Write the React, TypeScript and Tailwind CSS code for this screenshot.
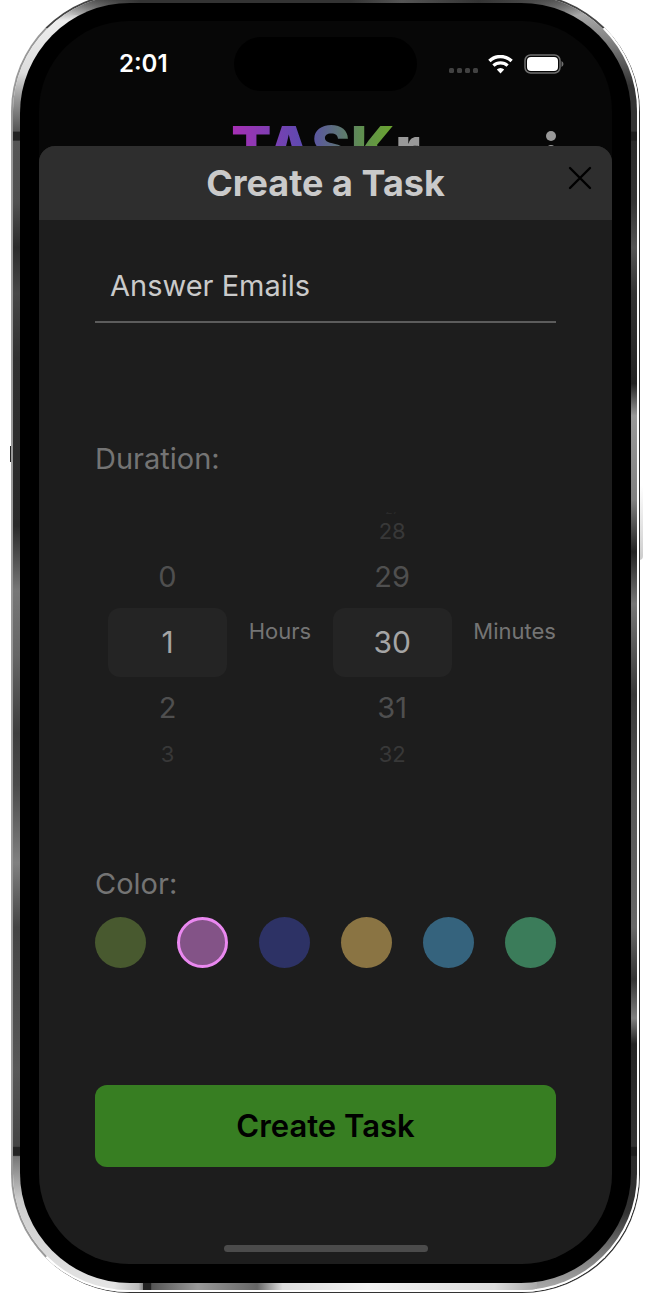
import { useState } from "react";

const swatches = [
  { name: "Olive", fill: "bg-[#48592f]" },
  { name: "Orchid", fill: "bg-[#835387]" },
  { name: "Indigo", fill: "bg-[#2d3265]" },
  { name: "Gold", fill: "bg-[#8a7443]" },
  { name: "Steel blue", fill: "bg-[#35637d]" },
  { name: "Jade", fill: "bg-[#3b7c5a]" },
];

function StatusBar() {
  return (
    <div className="flex h-[86px] items-center pl-20 pr-12">
      <time className="w-[115px] text-2xl font-semibold text-white">2:01</time>
      <div className="h-[54px] w-[183px] rounded-full bg-black" />
      <div className="ml-auto flex w-[115px] items-center">
        <svg width="29" height="20" viewBox="0 0 29 20" fill="#414141" aria-hidden="true">
          <rect x="0" y="14" width="5" height="5" rx="1.5" />
          <rect x="8" y="14" width="5" height="5" rx="1.5" />
          <rect x="16" y="14" width="5" height="5" rx="1.5" />
          <rect x="24" y="14" width="5" height="5" rx="1.5" />
        </svg>
        <svg className="ml-[10px]" width="25" height="19" viewBox="0 0 25 19" fill="none" stroke="#fff" aria-hidden="true">
          <path d="M1.4 6A16 16 0 0 1 23.6 6" strokeWidth="3.4" />
          <path d="M5.4 10.6A10.4 10.4 0 0 1 19.6 10.6" strokeWidth="3.2" />
          <path d="M12.5 18.4L8.8 14.6A5.3 5.3 0 0 1 16.2 14.6Z" fill="#fff" stroke="none" />
        </svg>
        <svg className="ml-[11px]" width="40" height="20" viewBox="0 0 40 20" aria-hidden="true">
          <rect x="1" y="1" width="35" height="18" rx="5.5" fill="none" stroke="#707070" strokeWidth="1.5" />
          <rect x="3" y="3" width="31" height="14" rx="4" fill="#fff" />
          <path d="M37.5 7Q39.5 8 39.5 10T37.5 13Z" fill="#707070" />
        </svg>
      </div>
    </div>
  );
}

function Wheel({ label, values }: { label: string; values: string[] }) {
  return (
    <ul role="listbox" aria-label={label} className="flex h-[260px] w-[119px] flex-col items-center overflow-hidden">
      <li className="flex h-1 w-full items-end justify-center overflow-hidden text-xs leading-3 text-[#2a2a2a]">{values[0]}</li>
      <li className="flex h-[30px] items-center text-[22px] text-[#383838]">{values[1]}</li>
      <li className="flex h-[62px] items-center text-[29px] text-[#4f4f4f]">{values[2]}</li>
      <li role="option" aria-selected="true" className="flex h-[69px] w-full shrink-0 items-center justify-center rounded-xl bg-[#242424] text-[30px] text-[#a5a5a5]">
        {values[3]}
      </li>
      <li className="flex h-[62px] items-center text-[29px] text-[#4f4f4f]">{values[4]}</li>
      <li className="flex h-[30px] items-center text-[22px] text-[#383838]">{values[5]}</li>
    </ul>
  );
}

function TaskForm() {
  const [title, setTitle] = useState("Answer Emails");
  const [color, setColor] = useState("Orchid");
  return (
    <form className="flex flex-col px-14 pt-[33px]" onSubmit={(e) => e.preventDefault()}>
      <input
        aria-label="Task name"
        value={title}
        onChange={(e) => setTitle(e.target.value)}
        className="h-[70px] w-full border-b-2 border-[#5c5c5c] bg-transparent px-[15px] pb-1 text-[29px] text-[#cacaca] outline-none"
      />

      <h2 className="mt-[115px] text-[29px] leading-[42px] text-[#747474]">Duration:</h2>
      <div className="mt-8 flex items-center justify-between pl-[13px]">
        <Wheel label="Hours" values={["", "", "0", "1", "2", "3"]} />
        <span className="pb-[22px] text-[22px] leading-8 text-[#747474]">Hours</span>
        <Wheel label="Minutes" values={["27", "28", "29", "30", "31", "32"]} />
        <span className="pb-[22px] text-[22px] leading-8 text-[#747474]">Minutes</span>
      </div>

      <fieldset className="mt-[91px]">
        <legend className="text-[29px] leading-[42px] text-[#747474]">Color:</legend>
        <div className="mt-3 flex justify-between">
          {swatches.map((s) => (
            <input
              key={s.name}
              type="radio"
              name="color"
              aria-label={s.name}
              checked={color === s.name}
              onChange={() => setColor(s.name)}
              className={`size-[51px] appearance-none rounded-full checked:border-3 checked:border-[#ea88f0] ${s.fill}`}
            />
          ))}
        </div>
      </fieldset>

      <button type="submit" className="mt-[117px] h-[82px] rounded-xl bg-[#377e22] text-[31px] font-semibold text-black">
        Create Task
      </button>
    </form>
  );
}

/* Brushed-metal reflections along the four sides of the phone's frame. */
function MetalRim() {
  return (
    <div className="absolute inset-0" aria-hidden="true">
      <div className="absolute inset-y-0 left-0 w-1/2 bg-[linear-gradient(180deg,#444_0%,#eee_2%,#ddd_6%,#999_8%,#555_10.5%,#222_10.6%,#222_11.2%,#555_11.3%,#505050_16%,#2b2b2b_19.5%,#464646_23%,#303030_28%,#292929_41%,#777_46%,#666_51%,#3d3d3d_57%,#4a4a4a_61%,#808080_67%,#444_72%,#585858_83%,#444_88.9%,#222_89%,#222_89.6%,#777_89.7%,#ccc_93%,#e5e5e5_100%)]" />
      <div className="absolute inset-y-0 right-0 w-1/2 bg-[linear-gradient(180deg,#444_0%,#aaa_1.5%,#777_4%,#333_7%,#333_10.5%,#1c1c1c_10.6%,#1c1c1c_11.2%,#2a2a2a_11.3%,#333_16%,#555_19.5%,#333_23%,#222_30%,#999_32.5%,#808080_39%,#222_43%,#777_47%,#383838_54%,#555_62%,#686868_72%,#333_76%,#808080_79%,#222_81%,#333_88.9%,#1c1c1c_89%,#1c1c1c_89.6%,#2a2a2a_89.7%,#333_94%,#777_97%,#aaa_100%)]" />
      <div className="absolute inset-x-14 top-0 h-5 bg-[linear-gradient(90deg,transparent,#333_14%,#333_55%,#555_65%,#333_80%,#444_88%,transparent)]" />
      <div className="absolute inset-x-[100px] bottom-0 h-5 bg-[linear-gradient(90deg,#e5e5e5_0%,#bbb_6%,#888_7%,#222_7.1%,#222_9%,#555_9.1%,#999_20%,#666_34%,#ddd_40%,#f3f3f3_60%,#ddd_90%,#aaa_100%)]" />
    </div>
  );
}

export default function App() {
  return (
    <main className="overflow-hidden bg-white pb-[9px] pl-[11px] pr-[21px] font-['Inter','Liberation_Sans',sans-serif]">
      <div className="relative -mt-[7px]">
        <div className="absolute -left-px top-[453px] h-4 w-px bg-[#222]" aria-hidden="true" />
        <div className="absolute -right-1 top-[417px] h-[150px] w-1 rounded-r bg-[linear-gradient(180deg,#fff_50%,#ccc)]" aria-hidden="true" />
        <div className="relative overflow-hidden rounded-[118px] border-2 border-t-[#444] border-r-white border-b-white border-l-[#999] pb-[7px] pl-[7px] pr-1.5 pt-2 shadow-[1px_1px_0_0_#333]">
          <MetalRim />
          <div className="relative overflow-hidden rounded-[110px] bg-black px-[19px] pb-[19px] pt-[18px]">
            <div className="flex flex-col overflow-hidden rounded-[90px] bg-[#070707]">
              <StatusBar />
              <header className="relative flex h-[39px] justify-center overflow-hidden pt-[11px]">
                <h1 className="text-[60px] leading-[60px] font-extrabold text-[#999]">
                  <span className="bg-[linear-gradient(90deg,#a82fb5,#5a4bb0_45%,#5f8f4f_80%,#6ba52c)] bg-clip-text text-transparent">TASK</span>r
                </h1>
                <button type="button" aria-label="Menu" className="absolute right-14 top-6 flex flex-col gap-1">
                  <span className="size-[10px] rounded-full bg-[#999]" />
                  <span className="size-[10px] rounded-full bg-[#999]" />
                </button>
              </header>
              <section className="flex flex-col rounded-t-2xl bg-[#1d1d1d]">
                <div className="relative flex h-[74px] items-center justify-center rounded-t-2xl bg-[#2e2e2e]">
                  <h2 className="text-4xl font-bold text-[#cacaca]">Create a Task</h2>
                  <button type="button" aria-label="Close" className="absolute right-5 top-5 text-black">
                    <svg width="24" height="24" viewBox="0 0 24 24" fill="none" stroke="currentColor" strokeWidth="2.4" strokeLinecap="round">
                      <path d="M2 2L22 22M22 2L2 22" />
                    </svg>
                  </button>
                </div>
                <TaskForm />
                <div className="mb-3 mt-[78px] h-[7px] w-[204px] self-center rounded-full bg-[#4b4b4b]" />
              </section>
            </div>
          </div>
        </div>
      </div>
    </main>
  );
}
